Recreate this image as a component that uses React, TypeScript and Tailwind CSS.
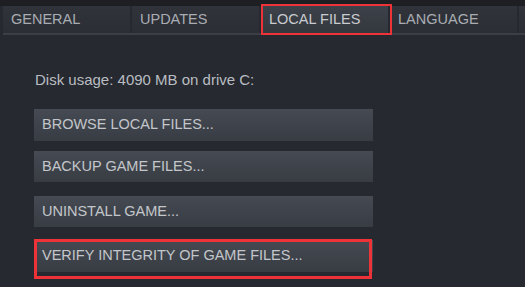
export default function App() {
  const tabs = ['GENERAL', 'UPDATES', 'LOCAL FILES', 'LANGUAGE', '']

  return (
    <div
      className="w-[525px] h-[287px] overflow-hidden bg-[#26292f] text-[#b9bdc2]"
      style={{ fontFamily: '"Liberation Sans", Arial, sans-serif' }}
    >
      {/* top strip */}
      <div className="h-[6px] bg-[#1d1f23]" />

      {/* tab bar */}
      <div className="flex gap-[2px] pl-[3px] h-[27px]">
        {tabs.map((t, i) => {
          const active = t === 'LOCAL FILES'
          return (
            <div
              key={i}
              className={
                active
                  ? 'relative z-10 shrink-0 w-[127px] h-full flex items-center pl-[8px] text-[14.5px] text-[#c8cbcf] bg-gradient-to-b from-[#3d4149] to-[#33373e]'
                  : 'relative shrink-0 w-[127px] h-full flex items-center pl-[8px] text-[14.5px] text-[#a9adb3] bg-gradient-to-b from-[#30333a] to-[#2b2e34]'
              }
            >
              {t}
              {active && (
                <span className="absolute -top-[2px] -bottom-[2px] left-0 -right-[4px] border-2 border-[#ee3338] pointer-events-none" />
              )}
            </div>
          )
        })}
      </div>
      <div className="ml-[3px] h-[2px] bg-[#3b3e45]" />

      {/* content */}
      <div className="pl-[34px] pt-[36px]">
        <p className="h-[18px] leading-[18px] text-[15px] pl-px">Disk usage: 4090 MB on drive C:</p>

        <div className="mt-[20px] flex flex-col items-start">
          <Btn className="h-[32px]">BROWSE LOCAL FILES...</Btn>
          <Btn className="h-[31px] mt-[10px]">BACKUP GAME FILES...</Btn>
          <Btn className="h-[31px] mt-[14px]">UNINSTALL GAME...</Btn>
          <div className="relative w-[339px] mt-[13px]">
            <Btn className="h-[32px]">VERIFY INTEGRITY OF GAME FILES...</Btn>
            <span className="absolute -top-[1px] -bottom-[7px] left-0 right-[1px] border-[3px] border-[#ee3338] pointer-events-none" />
          </div>
        </div>
      </div>
    </div>
  )
}

function Btn({ children, className }: { children: React.ReactNode; className: string }) {
  return (
    <div
      className={
        'w-[339px] flex items-center pl-[8px] text-[14.5px] text-[#c3c6ca] bg-gradient-to-b from-[#454a53] to-[#383c43] ' +
        className
      }
    >
      {children}
    </div>
  )
}
